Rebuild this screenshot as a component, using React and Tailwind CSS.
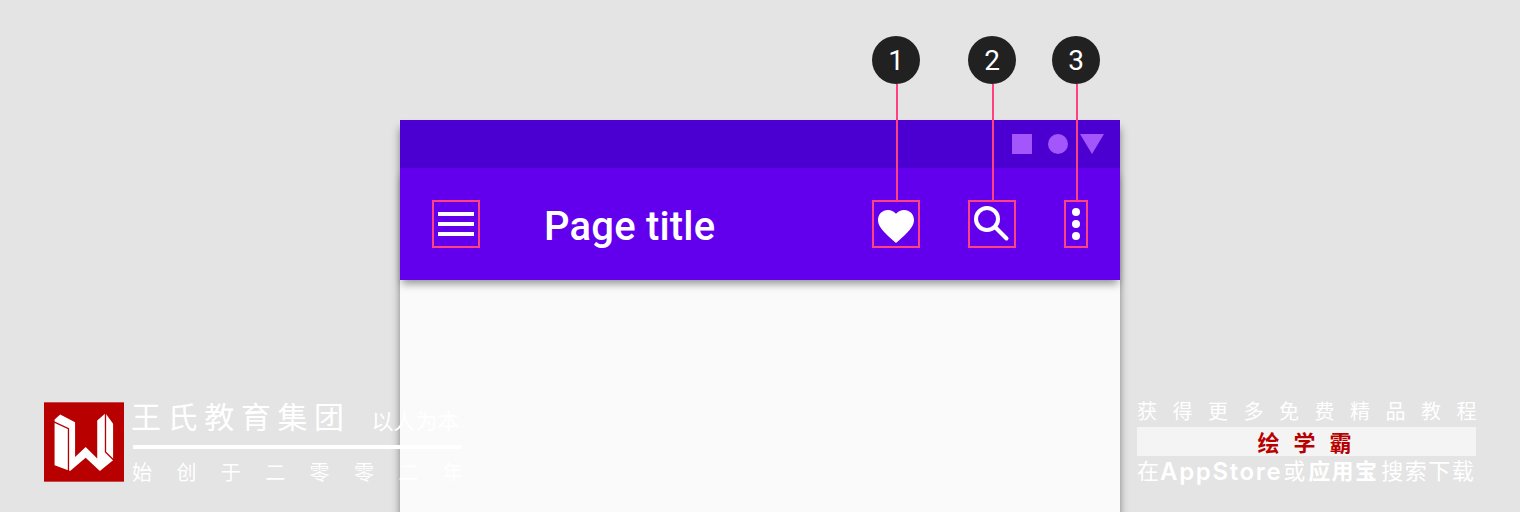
const cjk = "font-['Noto_Sans_CJK_SC',sans-serif]";

function Callout({ n, left }) {
  return (
    <div className={`absolute bottom-[calc(100%+2px)] flex flex-col items-center ${left}`}>
      <div className="w-12 h-12 pt-0.5 rounded-full bg-[#212121] text-white text-[28px] font-normal flex items-center justify-center">
        {n}
      </div>
      <div className="w-0.5 h-[116px] ml-0.5 bg-[#ff4081]" />
    </div>
  );
}

function Logo() {
  return (
    <svg width="80" height="80" viewBox="26 20 242 240" className="shrink-0 block">
      <rect x="26" y="20" width="242" height="240" fill="#b80000" />
      <polygon
        fill="#fff"
        points="58,72 75,57 120,80 120,185 152,155 187,190 187,75 212,53 235,85 235,195 195,228 152,188 105,228 58,210"
      />
      <polyline fill="none" stroke="#b80000" strokeWidth="4" points="56,79 100,100 100,230" />
      <polyline fill="none" stroke="#b80000" strokeWidth="4" points="212,50 212,170 238,196" />
    </svg>
  );
}

export default function App() {
  return (
    <div className="relative w-full h-[512px] overflow-hidden bg-[#e4e4e4] pt-[120px] font-['Roboto',sans-serif]">
      <div className="mx-auto w-[720px] h-[500px] bg-[#fafafa] shadow-[0_8px_8px_rgba(0,0,0,0.45)]">
        {/* status bar */}
        <div className="h-12 bg-[#4b00d1] flex items-center justify-end pr-4">
          <div className="w-5 h-5 bg-[#a356fb]" />
          <div className="w-5 h-5 ml-4 rounded-full bg-[#a356fb]" />
          <svg width="24" height="20" viewBox="0 0 24 20" className="ml-3">
            <polygon points="0,0 24,0 12,20" fill="#a356fb" />
          </svg>
        </div>

        {/* app bar */}
        <div className="relative h-28 bg-[#6200ee] flex items-center pl-8 pr-8 shadow-[0_6px_8px_-2px_rgba(0,0,0,0.4)]">
          <div className="w-12 h-12 border-2 border-[#ff4081] flex flex-col items-center justify-center gap-1.5">
            <div className="w-9 h-1 bg-white" />
            <div className="w-9 h-1 bg-white" />
            <div className="w-9 h-1 bg-white" />
          </div>
          <div className="ml-[64px] pt-1.5 text-white text-[40px] leading-none font-medium tracking-[0.2px]">Page title</div>

          <div className="ml-auto flex items-center gap-12">
            <div className="relative w-12 h-12 border-2 border-[#ff4081]">
              <Callout n="1" left="left-[-2px]" />
              <svg width="48" height="48" viewBox="-1.33 -2.56 26.67 26.67" className="absolute -left-0.5 -top-0.5">
                <path
                  fill="#fff"
                  d="M12 21.35l-1.45-1.32C5.4 15.36 2 12.28 2 8.5 2 5.42 4.42 3 7.5 3c1.74 0 3.41.81 4.5 2.09C13.09 3.81 14.76 3 16.5 3 19.58 3 22 5.42 22 8.5c0 3.78-3.4 6.86-8.55 11.54L12 21.35z"
                />
              </svg>
            </div>
            <div className="relative w-12 h-12 border-2 border-[#ff4081]">
              <Callout n="2" left="left-[-2px]" />
              <svg width="48" height="48" viewBox="0 0 48 48" className="absolute -left-0.5 -top-0.5">
                <circle cx="19" cy="19" r="11" fill="none" stroke="#fff" strokeWidth="4" />
                <line x1="27.5" y1="27.5" x2="38.5" y2="38.5" stroke="#fff" strokeWidth="4" strokeLinecap="round" />
              </svg>
            </div>
            <div className="relative w-6 h-12 border-2 border-[#ff4081] flex flex-col items-center justify-center gap-1">
              <Callout n="3" left="left-[-14px]" />
              <div className="w-2 h-2 rounded-full bg-white" />
              <div className="w-2 h-2 rounded-full bg-white" />
              <div className="w-2 h-2 rounded-full bg-white" />
            </div>
          </div>
        </div>
      </div>

      {/* watermark left */}
      <div className={`absolute left-[44px] top-[402px] flex ${cjk}`}>
        <Logo />
        <div className="ml-[9px] w-[329px] text-white">
          <div className="flex items-end h-[47px] border-b-4 border-white pb-[15px]">
            <span className="-ml-[2px] text-[30px] leading-[30px] tracking-[6.6px] whitespace-nowrap">王氏教育集团</span>
            <span className="ml-[21px] text-[22px] leading-[22px] whitespace-nowrap">以人为本</span>
          </div>
          <div className="mt-[10px] -ml-px text-[20px] leading-[26px] tracking-[24.4px] whitespace-nowrap">始创于二零零二年</div>
        </div>
      </div>

      {/* watermark right */}
      <div className={`absolute left-[1137px] top-[397px] w-[339px] text-white ${cjk}`}>
        <div className="text-[20px] leading-[28px] tracking-[15.5px] whitespace-nowrap">获得更多免费精品教程</div>
        <div className="mt-[2px] h-[29px] bg-[#f4f4f4] flex items-center justify-center text-[22px] font-bold text-[#b80000] tracking-[14px] pl-[10px]">
          绘学霸
        </div>
        <div className="flex items-center h-[26px] text-[22px] leading-[26px] whitespace-nowrap">
          <span>在</span>
          <span className="ml-[1px] translate-y-[3px] font-['Inter',sans-serif] font-semibold text-[24px] leading-[20px] tracking-[1.65px]">AppStore</span>
          <span className="ml-px">或</span>
          <span className="ml-[3px] font-bold tracking-[1.3px]">应用宝</span>
          <span className="ml-[3px] tracking-[1.5px]">搜索下载</span>
        </div>
      </div>
    </div>
  );
}
